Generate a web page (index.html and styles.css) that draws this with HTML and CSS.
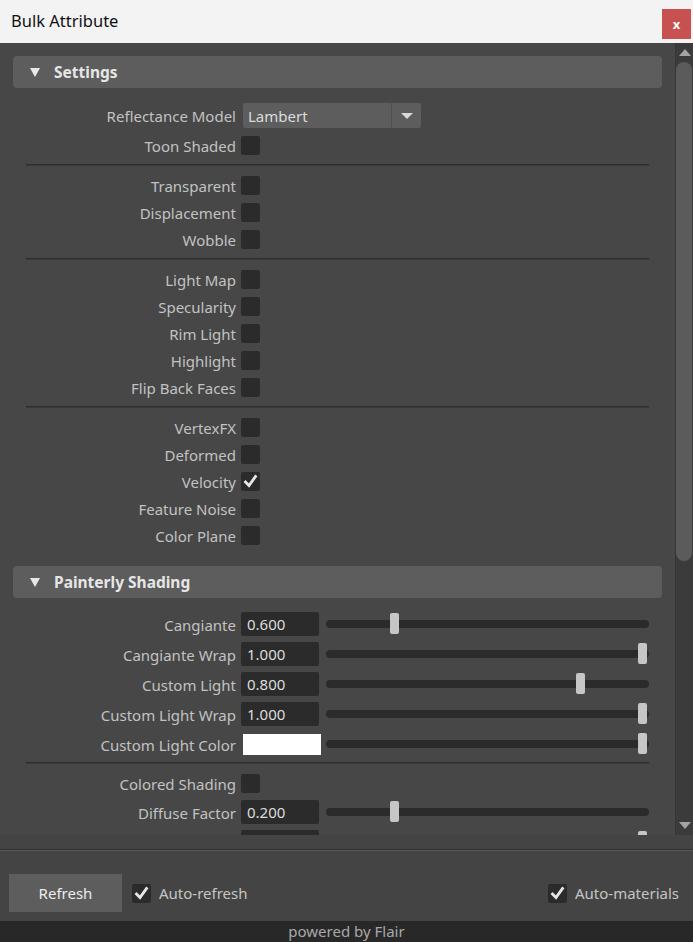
FILE: index.html
```html
<!DOCTYPE html>
<html>
<head>
<meta charset="utf-8">
<title>Bulk Attribute</title>
<link rel="stylesheet" href="styles.css">
</head>
<body>
<div class="window">
  <div class="titlebar">
    <span class="title">Bulk Attribute</span>
    <span class="close">x</span>
  </div>
  <div class="main">
    <div class="scroll">
      <div class="section">
        <div class="header"><span class="tri"></span><span class="htext">Settings</span></div>
        <div class="group g-settings">
          <div class="row r27">
            <span class="lbl">Reflectance Model</span>
            <div class="ctl"><div class="dropdown"><span class="dd-text">Lambert</span><span class="dd-btn"><span class="dd-tri"></span></span></div></div>
          </div>
          <div class="row r27 mt3">
            <span class="lbl">Toon Shaded</span>
            <div class="ctl"><span class="cb"></span></div>
          </div>
          <div class="sep"></div>
          <div class="row r27">
            <span class="lbl">Transparent</span>
            <div class="ctl"><span class="cb"></span></div>
          </div>
          <div class="row r27">
            <span class="lbl">Displacement</span>
            <div class="ctl"><span class="cb"></span></div>
          </div>
          <div class="row r27">
            <span class="lbl">Wobble</span>
            <div class="ctl"><span class="cb"></span></div>
          </div>
          <div class="sep"></div>
          <div class="row r27">
            <span class="lbl">Light Map</span>
            <div class="ctl"><span class="cb"></span></div>
          </div>
          <div class="row r27">
            <span class="lbl">Specularity</span>
            <div class="ctl"><span class="cb"></span></div>
          </div>
          <div class="row r27">
            <span class="lbl">Rim Light</span>
            <div class="ctl"><span class="cb"></span></div>
          </div>
          <div class="row r27">
            <span class="lbl">Highlight</span>
            <div class="ctl"><span class="cb"></span></div>
          </div>
          <div class="row r27">
            <span class="lbl">Flip Back Faces</span>
            <div class="ctl"><span class="cb"></span></div>
          </div>
          <div class="sep"></div>
          <div class="row r27">
            <span class="lbl">VertexFX</span>
            <div class="ctl"><span class="cb"></span></div>
          </div>
          <div class="row r27">
            <span class="lbl">Deformed</span>
            <div class="ctl"><span class="cb"></span></div>
          </div>
          <div class="row r27">
            <span class="lbl">Velocity</span>
            <div class="ctl"><span class="cb"><svg class="check" viewBox="0 0 19 19"><path d="M4.5 10 L8 13.5 L14.5 4.5" /></svg></span></div>
          </div>
          <div class="row r27">
            <span class="lbl">Feature Noise</span>
            <div class="ctl"><span class="cb"></span></div>
          </div>
          <div class="row r27">
            <span class="lbl">Color Plane</span>
            <div class="ctl"><span class="cb"></span></div>
          </div>
        </div>
      </div>

      <div class="section s2">
        <div class="header"><span class="tri"></span><span class="htext">Painterly Shading</span></div>
        <div class="group g-paint">
          <div class="row r30">
            <span class="lbl">Cangiante</span>
            <div class="ctl"><span class="num">0.600</span><div class="slider"><span class="handle" style="left:64px"></span></div></div>
          </div>
          <div class="row r30">
            <span class="lbl">Cangiante Wrap</span>
            <div class="ctl"><span class="num">1.000</span><div class="slider"><span class="handle" style="left:312px"></span></div></div>
          </div>
          <div class="row r30">
            <span class="lbl">Custom Light</span>
            <div class="ctl"><span class="num">0.800</span><div class="slider"><span class="handle" style="left:250px"></span></div></div>
          </div>
          <div class="row r30">
            <span class="lbl">Custom Light Wrap</span>
            <div class="ctl"><span class="num">1.000</span><div class="slider"><span class="handle" style="left:312px"></span></div></div>
          </div>
          <div class="row r30">
            <span class="lbl">Custom Light Color</span>
            <div class="ctl"><span class="swatch"></span><div class="slider sl-color"><span class="handle" style="left:312px"></span></div></div>
          </div>
          <div class="sep sep3"></div>
          <div class="row r27">
            <span class="lbl">Colored Shading</span>
            <div class="ctl"><span class="cb"></span></div>
          </div>
          <div class="row r30">
            <span class="lbl">Diffuse Factor</span>
            <div class="ctl"><span class="num">0.200</span><div class="slider"><span class="handle" style="left:64px"></span></div></div>
          </div>
          <div class="row r30">
            <span class="lbl"></span>
            <div class="ctl"><span class="num"></span><div class="slider"><span class="handle" style="left:312px"></span></div></div>
          </div>
        </div>
      </div>
    </div>
    <div class="scrollbar">
      <div class="sb-btn"><span class="sb-up"></span></div>
      <div class="sb-thumb"></div>
      <div class="sb-fill"></div>
      <div class="sb-btn sb-btn-down"><span class="sb-down"></span></div>
    </div>
  </div>
  <div class="strip"></div>
  <div class="divider"></div>
  <div class="bottom">
    <button class="refresh">Refresh</button>
    <span class="cb cb-b"><svg class="check" viewBox="0 0 19 19"><path d="M4.5 10 L8 13.5 L14.5 4.5" /></svg></span>
    <span class="btext">Auto-refresh</span>
    <span class="spacer"></span>
    <span class="cb cb-b"><svg class="check" viewBox="0 0 19 19"><path d="M4.5 10 L8 13.5 L14.5 4.5" /></svg></span>
    <span class="btext">Auto-materials</span>
  </div>
  <div class="footer">powered by Flair</div>
</div>
</body>
</html>
```

FILE: styles.css
```css
* { box-sizing: border-box; }
html, body {
  margin: 0;
  padding: 0;
  background: #474747;
}
body {
  font-family: "Noto Sans", "Open Sans", sans-serif;
  font-size: 15px;
  color: #c4c4c4;
}
.window {
  width: 693px;
  height: 942px;
  display: flex;
  flex-direction: column;
  overflow: hidden;
}
.titlebar {
  height: 43px;
  background: #f3f3f3;
  display: flex;
  align-items: center;
  padding-left: 11px;
  flex: none;
}
.title {
  font-size: 16.5px;
  color: #111;
  flex: 1;
  margin-top: -2px;
}
.close {
  width: 29px;
  height: 30px;
  margin-right: 2px;
  margin-top: 5px;
  background: #c75050;
  color: #fff;
  font-weight: bold;
  font-size: 13px;
  display: flex;
  align-items: center;
  justify-content: center;
  line-height: 1;
}
.main {
  height: 792px;
  display: flex;
  flex: none;
  background: #474747;
}
.scroll {
  flex: 1;
  overflow: hidden;
  padding: 13px 13px 0 13px;
}
.section {
  width: 649px;
}
.s2 { margin-top: 17px; }
.header {
  height: 32px;
  background: #5d5d5d;
  border-radius: 4px;
  display: flex;
  align-items: center;
  padding-left: 17px;
}
.tri {
  width: 0;
  height: 0;
  border-left: 5.5px solid transparent;
  border-right: 5.5px solid transparent;
  border-top: 9px solid #e8e8e8;
  margin-right: 14px;
}
.htext {
  font-weight: bold;
  font-size: 15.5px;
  color: #e6e6e6;
  margin-top: -1px;
}
.g-settings { padding-top: 14px; }
.g-paint { padding-top: 11px; }
.row {
  display: grid;
  grid-template-columns: 223px 1fr;
  column-gap: 5px;
  align-items: center;
}
.r27 { height: 27px; }
.r30 { height: 30px; }
.mt3 { margin-top: 3px; }
.lbl {
  text-align: right;
  white-space: nowrap;
  color: #c2c2c2;
  margin-top: 1px;
}
.ctl {
  display: flex;
  align-items: center;
}
.sep {
  height: 2px;
  margin: 5px 13px 6px 13px;
  background: #2e2e2e;
  border-bottom: 1px solid #3a3a3a;
}
.sep3 { margin-top: 3px; }
.cb {
  width: 19px;
  height: 19px;
  background: #2b2b2b;
  border-radius: 2px;
  display: inline-flex;
  align-items: center;
  justify-content: center;
  flex: none;
}
.check {
  width: 19px;
  height: 19px;
  fill: none;
  stroke: #e6e6e6;
  stroke-width: 2.8;
  stroke-linecap: square;
}
.dropdown {
  margin-left: 2px;
  width: 178px;
  height: 25px;
  background: #5d5d5d;
  border-radius: 2px;
  display: flex;
  align-items: center;
}
.dd-text {
  flex: 1;
  padding-left: 5px;
  color: #dcdcdc;
}
.dd-btn {
  width: 30px;
  height: 25px;
  border-left: 1px solid #505050;
  display: flex;
  align-items: center;
  justify-content: center;
}
.dd-tri {
  width: 0;
  height: 0;
  border-left: 6px solid transparent;
  border-right: 6px solid transparent;
  border-top: 6px solid #d8d8d8;
}
.num {
  width: 78px;
  height: 24px;
  background: #2b2b2b;
  border-radius: 2px;
  color: #dcdcdc;
  padding-left: 6px;
  display: flex;
  align-items: center;
  flex: none;
}
.swatch {
  margin-left: 2px;
  width: 78px;
  height: 21px;
  background: #fff;
  flex: none;
}
.slider {
  position: relative;
  margin-left: 7px;
  width: 323px;
  height: 8px;
  background: #2b2b2b;
  border-radius: 4px;
}
.sl-color { margin-left: 5px; }
.handle {
  position: absolute;
  top: -7px;
  width: 9px;
  height: 21px;
  background: #c6c6c6;
  border-radius: 2px;
}
.scrollbar {
  width: 18px;
  background: #3b3b3b;
  border-left: 1px solid #363636;
  display: flex;
  flex-direction: column;
  flex: none;
}
.sb-btn {
  height: 19px;
  display: flex;
  align-items: center;
  justify-content: center;
  flex: none;
}
.sb-up {
  width: 0; height: 0;
  border-left: 6.5px solid transparent;
  border-right: 6.5px solid transparent;
  border-bottom: 7px solid #a3a3a3;
}
.sb-down {
  width: 0; height: 0;
  border-left: 6.5px solid transparent;
  border-right: 6.5px solid transparent;
  border-top: 7px solid #a3a3a3;
}
.sb-thumb {
  height: 499px;
  width: 16px;
  background: #5b5b5b;
  border-radius: 8px;
  flex: none;
}
.sb-fill { flex: 1; }
.strip {
  height: 14px;
  background: #444;
  flex: none;
}
.divider {
  height: 2px;
  background: #2f2f2f;
  border-bottom: 1px solid #5a5a5a;
  flex: none;
}
.bottom {
  height: 70px;
  background: #444;
  display: flex;
  align-items: center;
  padding: 22px 14px 8px 9px;
  flex: none;
}
.refresh {
  width: 113px;
  height: 38px;
  background: #5d5d5d;
  border: none;
  border-radius: 0;
  color: #ececec;
  font-family: "Noto Sans", "Open Sans", sans-serif;
  font-size: 15px;
  padding: 0;
  margin-right: 10px;
}
.cb-b { margin-right: 8px; }
.btext {
  font-size: 15px;
  color: #c4c4c4;
}
.spacer { flex: 1; }
.footer {
  height: 21px;
  background: #282828;
  color: #a8a8a8;
  font-size: 15px;
  text-align: center;
  line-height: 21px;
  flex: none;
}
```
